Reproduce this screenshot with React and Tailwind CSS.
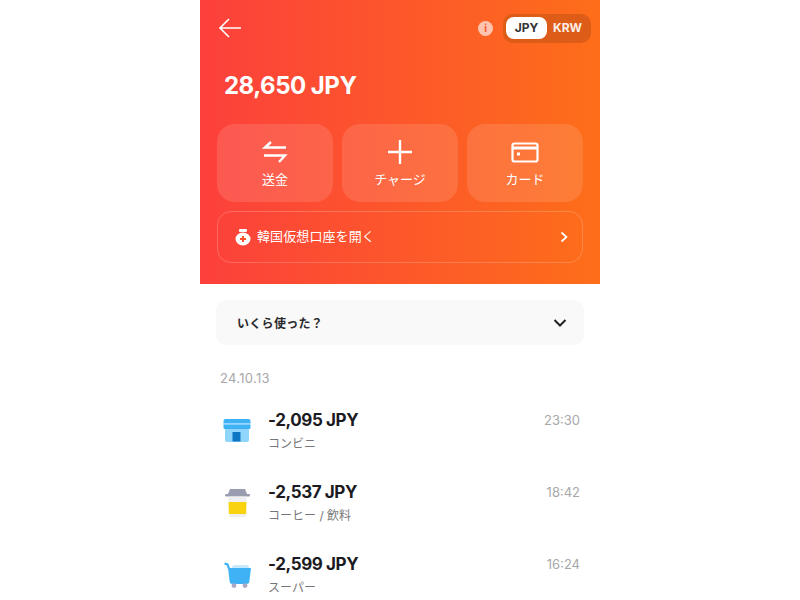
import React from 'react'

const font = { fontFamily: 'Inter, "Noto Sans CJK JP", sans-serif' }

function StoreIcon() {
  return (
    <svg width="28" height="23" viewBox="0 0 28 23">
      <path d="M2 8h24v13a2 2 0 0 1-2 2H4a2 2 0 0 1-2-2z" fill="#90d5fb" />
      <path d="M0.5 2a2 2 0 0 1 2-2h23a2 2 0 0 1 2 2v2.5h-27z" fill="#3eb2f5" />
      <rect x="0.5" y="4.5" width="27" height="1" fill="#90d5fb" />
      <path d="M0.5 5.5h27V9a1 1 0 0 1-1 1h-25a1 1 0 0 1-1-1z" fill="#3eb2f5" />
      <rect x="9.5" y="13" width="8" height="9.5" rx="0.5" fill="#0d77c6" />
    </svg>
  )
}

function CoffeeIcon() {
  return (
    <svg width="25" height="28" viewBox="0 0 25 28">
      <path d="M5 0h15l2 5H3z" fill="#9a9cb0" />
      <rect x="0" y="5" width="25" height="2.6" rx="1.3" fill="#9a9cb0" />
      <path d="M3.5 7.6h18V13h-18z" fill="#efeff1" />
      <path d="M3.5 13h18l-.4 12H3.9z" fill="#f9d30f" />
      <path d="M3.9 25h17.2l-.6 3H4.5z" fill="#efeff1" />
    </svg>
  )
}

function CartIcon() {
  return (
    <svg width="27" height="26" viewBox="0 0 27 26">
      <path d="M8 6a3 3 0 0 1 3-3h11a3 3 0 0 1 3 3z" fill="#c8e9fb" />
      <path d="M0.5 1.5l3 1 1.5 4" fill="none" stroke="#3eb2f5" strokeWidth="2.2" />
      <path d="M4 6h23l-1.6 13a3 3 0 0 1-3 3H8.6a3 3 0 0 1-3-3z" fill="#3eb2f5" />
      <circle cx="10" cy="23.6" r="2.4" fill="#a9a9c6" />
      <circle cx="21" cy="23.6" r="2.4" fill="#a9a9c6" />
    </svg>
  )
}

function ActionButton({ icon, label }) {
  return (
    <div className="flex-1 h-[78px] rounded-[18px] bg-white/[0.12] flex flex-col items-center pt-[14px] text-white">
      <div className="h-[28px] flex items-center justify-center">{icon}</div>
      <div className="text-[13px] leading-[18px] mt-[4px]">{label}</div>
    </div>
  )
}

function Row({ icon, amount, label, time }) {
  return (
    <div className="h-[72px] flex pl-[20px] pr-[20px]">
      <div className="w-[28px] h-[53px] ml-[3px] flex items-center justify-center">{icon}</div>
      <div className="ml-[17px] flex-1">
        <div className="text-[17px] leading-[24px] font-bold text-[#1b1b1f] mt-[4px] tracking-[-0.4px]">{amount}</div>
        <div className="text-[12px] leading-[18px] text-[#77777a] mt-[3px]">{label}</div>
      </div>
      <div className="text-[13px] leading-[20px] text-[#a8a8aa] mt-[6px]">{time}</div>
    </div>
  )
}

export default function App() {
  return (
    <div className="w-[800px] h-[600px] overflow-hidden bg-white flex justify-center" style={font}>
      <div className="w-[400px] h-[600px] overflow-hidden bg-white">
        <div className="h-[284px] bg-linear-to-r/srgb from-[#fc403c] to-[#fd6e19] px-[17px] pt-[14px]">
          <div className="h-[28px] flex items-center justify-between">
            <svg width="26" height="24" viewBox="0 0 26 24" fill="none" stroke="white" strokeWidth="1.6">
              <path d="M24 12H3M12 3l-9 9 9 9" />
            </svg>
            <div className="flex items-center mr-[-8px]">
              <div className="w-[15px] h-[15px] rounded-full bg-[#ffc4b0] text-[#f4562c] text-[10px] font-bold flex items-center justify-center mr-[10px]">i</div>
              <div className="w-[88px] h-[29px] rounded-[10px] bg-[#dc5c18] flex items-center pl-[3px]">
                <div className="w-[41px] h-[22px] rounded-[8px] bg-white text-[#333] text-[12px] font-bold flex items-center justify-center">JPY</div>
                <div className="text-white/90 text-[12px] font-bold ml-[6px]">KRW</div>
              </div>
            </div>
          </div>
          <div className="text-[24px] leading-[32px] font-bold text-white mt-[28px] ml-[7px] tracking-[-0.5px]">28,650 JPY</div>
          <div className="flex gap-[9px] mt-[22px]">
            <ActionButton
              label="送金"
              icon={
                <svg width="26" height="24" viewBox="0 0 26 24" fill="none" stroke="white" strokeWidth="2.4">
                  <path d="M24 7.5H3L9 2M2 15.5h21L17 22" />
                </svg>
              }
            />
            <ActionButton
              label="チャージ"
              icon={
                <svg width="26" height="26" viewBox="0 0 26 26" fill="none" stroke="white" strokeWidth="2.4">
                  <path d="M13 1v24M1 13h24" />
                </svg>
              }
            />
            <ActionButton
              label="カード"
              icon={
                <svg width="28" height="21" viewBox="0 0 28 21" fill="none" stroke="white" strokeWidth="2.2">
                  <rect x="1.5" y="1.5" width="25" height="18" rx="2" />
                  <path d="M1.5 6h25" strokeWidth="3" />
                  <rect x="6" y="10.5" width="3" height="3" fill="white" stroke="none" />
                </svg>
              }
            />
          </div>
          <div className="h-[52px] mt-[9px] rounded-[14px] border border-white/20 flex items-center pl-[17px] pr-[13px] text-white">
            <svg width="16" height="18" viewBox="0 0 16 18" className="shrink-0">
              <rect x="4" y="1" width="8" height="3" rx="1" fill="white" />
              <ellipse cx="8" cy="11" rx="7.5" ry="6.5" fill="white" />
              <path d="M8 8v6M5 11h6" stroke="#f9522c" strokeWidth="2" />
            </svg>
            <div className="text-[13px] ml-[6px] flex-1 tracking-[0.1px]">韓国仮想口座を開く</div>
            <svg width="10" height="12" viewBox="0 0 10 12" fill="none" stroke="white" strokeWidth="1.7">
              <path d="M2.5 1.5L7.5 6l-5 4.5" />
            </svg>
          </div>
        </div>
        <div className="px-[16px] pt-[16px]">
          <div className="h-[45px] rounded-[10px] bg-[#f9f9f9] flex items-center justify-between pl-[21px] pr-[17px]">
            <div className="text-[12px] leading-[18px] pt-[2px] font-bold text-[#2a2a2e] tracking-[0.3px]">いくら使った？</div>
            <svg width="14" height="10" viewBox="0 0 14 10" fill="none" stroke="#222" strokeWidth="2">
              <path d="M1.5 2L7 7.5 12.5 2" />
            </svg>
          </div>
        </div>
        <div className="text-[13px] leading-[18px] text-[#a8a8aa] pl-[20px] mt-[24px] mb-[17px] tracking-[0.3px]">24.10.13</div>
        <Row icon={<StoreIcon />} amount="-2,095 JPY" label="コンビニ" time="23:30" />
        <Row icon={<CoffeeIcon />} amount="-2,537 JPY" label="コーヒー / 飲料" time="18:42" />
        <Row icon={<CartIcon />} amount="-2,599 JPY" label="スーパー" time="16:24" />
      </div>
    </div>
  )
}
